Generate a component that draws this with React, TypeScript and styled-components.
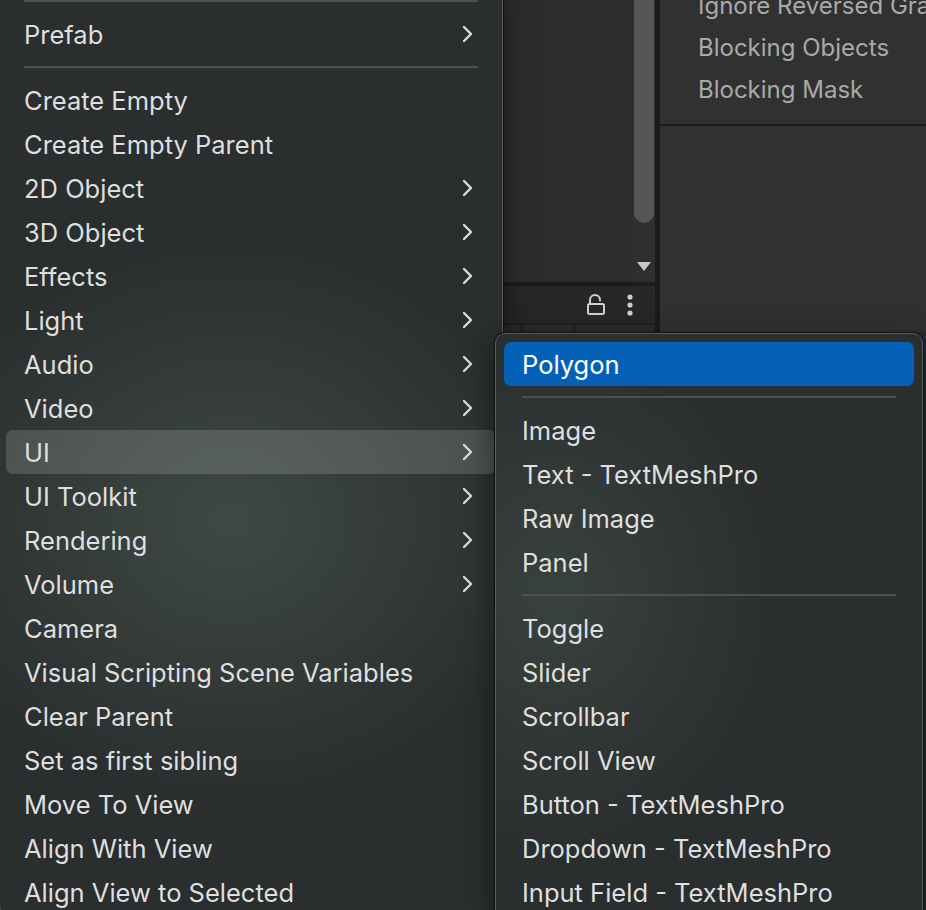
import React from "react"
import styled, { createGlobalStyle } from "styled-components"

const GlobalStyle = createGlobalStyle`
  html, body {
    margin: 0;
    padding: 0;
    background: #2b2e2f;
  }
  * { box-sizing: border-box; }
`

const Screen = styled.div`
  position: relative;
  width: 926px;
  height: 910px;
  overflow: hidden;
  background: #2b2e2f;
  font-family: Inter, "Noto Sans", sans-serif;
`

/* editor panels behind the menus */

const Editor = styled.div`
  display: flex;
  height: 332px;
  padding-left: 503px;
`

const Hierarchy = styled.div`
  width: 152px;
  flex-shrink: 0;
  display: flex;
  flex-direction: column;
  background: #2c2c2c;
`

const ListArea = styled.div`
  height: 282px;
  display: flex;
  justify-content: flex-end;
`

const ScrollTrack = styled.div`
  width: 23px;
  display: flex;
  flex-direction: column;
  align-items: center;
  justify-content: space-between;
  background: #2f2f2f;
  padding: 0 1px 10px 2px;
`

const ScrollThumb = styled.div`
  width: 20px;
  height: 223px;
  border-radius: 0 0 10px 10px;
  background: #555555;
`

const HRule = styled.div<{ $h: number }>`
  height: ${p => p.$h}px;
  background: #1b1b1b;
  flex-shrink: 0;
`

const Toolbar = styled.div`
  height: 37px;
  display: flex;
  align-items: center;
  justify-content: flex-end;
  gap: 22px;
  padding-right: 22px;
  background: #272727;
  border-top-right-radius: 7px;
`

const HeaderStrip = styled.div`
  flex: 1;
  display: flex;
  gap: 2px;
  background: #1f1f1f;
  padding-top: 2px;
`

const HeaderCell = styled.div<{ $w?: number }>`
  background: #2b2b2b;
  ${p => (p.$w ? `width: ${p.$w}px;` : "flex: 1;")}
`

const PanelDivider = styled.div`
  width: 5px;
  flex-shrink: 0;
  background: #1a1a1a;
`

const Inspector = styled.div`
  flex: 1;
  min-width: 0;
  overflow: hidden;
  display: flex;
  flex-direction: column;
  background: #313131;
`

const PropList = styled.div`
  margin-top: -16px;
  height: 140px;
  padding-left: 38px;
`

const PropRow = styled.div`
  height: 42px;
  display: flex;
  align-items: center;
  font-size: 24px;
  color: #a9a9a9;
  white-space: nowrap;
`

const InspectorRule = styled.div`
  height: 2px;
  background: #1c1c1c;
`

/* popup menus */

const Menu = styled.div`
  position: absolute;
  background: #2b2f30;
  border: 1px solid #5a5e60;
  box-shadow: 0 0 0 1px #111, 0 10px 30px rgba(0, 0, 0, 0.5);
`

const MainMenu = styled(Menu)`
  top: -11px;
  left: -1px;
  width: 504px;
  padding: 0 6px;
  border-radius: 0 0 10px 10px;
  background:
    radial-gradient(ellipse 320px 280px at 230px 530px, rgba(80, 96, 84, 0.55), rgba(80, 96, 84, 0) 100%),
    #2a2e2f;
`

const SubMenu = styled(Menu)`
  top: 333px;
  left: 495px;
  width: 428px;
  padding: 8px;
  border-radius: 10px;
  background:
    radial-gradient(ellipse 220px 260px at 60px 260px, rgba(80, 96, 84, 0.4), rgba(80, 96, 84, 0) 100%),
    #2a2e2f;
`

const Item = styled.div<{ $active?: "hover" | "select" }>`
  height: 44px;
  display: flex;
  align-items: center;
  justify-content: space-between;
  padding: 0 23px 0 18px;
  border-radius: 7px;
  font-size: 25.5px;
  color: ${p => (p.$active === "select" ? "#ffffff" : "#dfdfdf")};
  white-space: nowrap;
  background: ${p =>
    p.$active === "select"
      ? "#0561b8"
      : p.$active === "hover"
      ? "rgba(255, 255, 255, 0.15)"
      : "transparent"};
`

const Separator = styled.div`
  height: 22px;
  display: flex;
  align-items: center;
  padding: 0 18px;
  &::after {
    content: "";
    flex: 1;
    height: 2px;
    background: #4c5052;
  }
`

const Chevron = () => (
  <svg width="12" height="18" viewBox="0 0 12 18" fill="none">
    <path d="M3 2 L10 9 L3 16" stroke="#dcdcdc" strokeWidth="2.4" strokeLinecap="round" strokeLinejoin="round" />
  </svg>
)

const DownArrow = () => (
  <svg width="14" height="10" viewBox="0 0 14 10">
    <path d="M0 0 H14 L7 9 Z" fill="#c8c8c8" />
  </svg>
)

const OpenLock = () => (
  <svg width="18" height="21" viewBox="0 0 18 21" fill="none">
    <path d="M3 10 V6 A5 5 0 0 1 13 6 V6.5" stroke="#cfcfcf" strokeWidth="2" strokeLinecap="round" />
    <rect x="1" y="10" width="16" height="10" rx="1.5" stroke="#cfcfcf" strokeWidth="2" />
  </svg>
)

const Kebab = () => (
  <svg width="6" height="22" viewBox="0 0 6 22">
    <circle cx="3" cy="3" r="2.6" fill="#cfcfcf" />
    <circle cx="3" cy="11" r="2.6" fill="#cfcfcf" />
    <circle cx="3" cy="19" r="2.6" fill="#cfcfcf" />
  </svg>
)

type Entry = { label: string; sub?: boolean; sep?: boolean; active?: "hover" | "select" }

const mainEntries: Entry[] = [
  { label: "", sep: true },
  { label: "Prefab", sub: true },
  { label: "", sep: true },
  { label: "Create Empty" },
  { label: "Create Empty Parent" },
  { label: "2D Object", sub: true },
  { label: "3D Object", sub: true },
  { label: "Effects", sub: true },
  { label: "Light", sub: true },
  { label: "Audio", sub: true },
  { label: "Video", sub: true },
  { label: "UI", sub: true, active: "hover" },
  { label: "UI Toolkit", sub: true },
  { label: "Rendering", sub: true },
  { label: "Volume", sub: true },
  { label: "Camera" },
  { label: "Visual Scripting Scene Variables" },
  { label: "Clear Parent" },
  { label: "Set as first sibling" },
  { label: "Move To View" },
  { label: "Align With View" },
  { label: "Align View to Selected" },
]

const uiEntries: Entry[] = [
  { label: "Polygon", active: "select" },
  { label: "", sep: true },
  { label: "Image" },
  { label: "Text - TextMeshPro" },
  { label: "Raw Image" },
  { label: "Panel" },
  { label: "", sep: true },
  { label: "Toggle" },
  { label: "Slider" },
  { label: "Scrollbar" },
  { label: "Scroll View" },
  { label: "Button - TextMeshPro" },
  { label: "Dropdown - TextMeshPro" },
  { label: "Input Field - TextMeshPro" },
]

const renderEntries = (entries: Entry[]) =>
  entries.map((e, i) =>
    e.sep ? (
      <Separator key={i} />
    ) : (
      <Item key={i} $active={e.active}>
        <span>{e.label}</span>
        {e.sub && <Chevron />}
      </Item>
    )
  )

export default function App() {
  return (
    <>
      <GlobalStyle />
      <Screen>
        <Editor>
          <Hierarchy>
            <ListArea>
              <ScrollTrack>
                <ScrollThumb />
                <DownArrow />
              </ScrollTrack>
            </ListArea>
            <HRule $h={4} />
            <Toolbar>
              <OpenLock />
              <Kebab />
            </Toolbar>
            <HeaderStrip>
              <HeaderCell $w={18} />
              <HeaderCell $w={50} />
              <HeaderCell />
            </HeaderStrip>
          </Hierarchy>
          <PanelDivider />
          <Inspector>
            <PropList>
              <PropRow>Ignore Reversed Graphics</PropRow>
              <PropRow>Blocking Objects</PropRow>
              <PropRow>Blocking Mask</PropRow>
            </PropList>
            <InspectorRule />
          </Inspector>
        </Editor>

        <MainMenu>{renderEntries(mainEntries)}</MainMenu>
        <SubMenu>{renderEntries(uiEntries)}</SubMenu>
      </Screen>
    </>
  )
}
